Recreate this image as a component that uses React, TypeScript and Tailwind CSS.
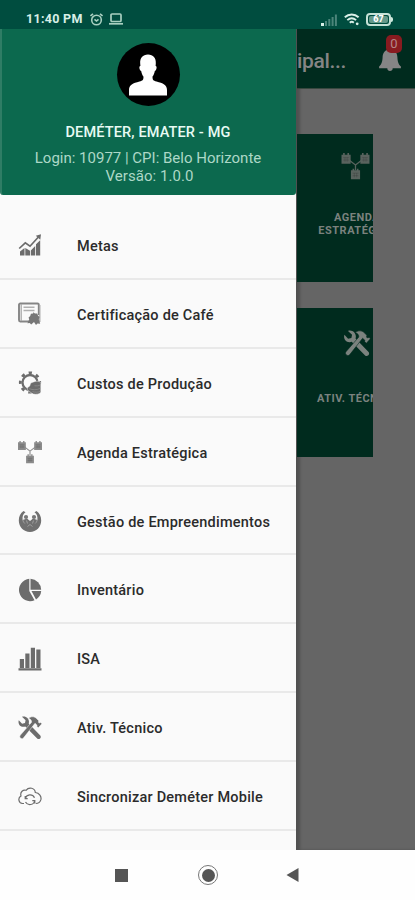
import React from "react";

type IconProps = { className?: string };

const MetasIcon = ({ className }: IconProps) => (
  <svg className={className} viewBox="0 0 24 24" fill="currentColor">
    <path d="M2 18.500l4.500-3.500v7.500H2zM7.300 15l4.700 2.800v4.700H7.300zM12.800 17.500l4.400-4.500v9.500h-4.400zM18 11.200l4.200-4v15.300H18z" />
    <path d="M1.200 15.500L7.300 9.800l4.700 3.400 8.200-9" fill="none" stroke="currentColor" strokeWidth="1.700" />
    <path d="M17.800 2.700l5.200-1.400-.7 5.400z" />
  </svg>
);

const CertificateIcon = ({ className }: IconProps) => (
  <svg className={className} viewBox="0 0 24 24">
    <path d="M2.300 1.500h17.200a1.300 1.300 0 0 1 1.300 1.300V13M11 19.500H2.300A1.500 1.500 0 0 1 1 18V2.800a1.300 1.300 0 0 1 1.300-1.300" fill="none" stroke="#858585" strokeWidth="1.900" />
    <path d="M21.800 3v17M3.200 2v17" stroke="#a9a9a9" strokeWidth="1.300" />
    <path d="M5.500 5.300h11M5.500 8.500h11" stroke="#b0b0b0" strokeWidth="1.400" />
    <path d="M15 10.200l2 1.200 2.200.1.800 2 1.500 1.600-.7 2.200 1.400 4.500-2.700-.3-1.500 1.500-2-3-2.800 2.600-1.500-1.500-2.300.1 1.800-3.700-.6-2 1.600-1.600.7-2.200 2.300-.1z" fill="#777" />
  </svg>
);

const CostIcon = ({ className }: IconProps) => (
  <svg className={className} viewBox="0 0 24 24">
    <circle cx="12" cy="11.500" r="7.500" fill="none" stroke="currentColor" strokeWidth="2.300" />
    <circle cx="12" cy="11.500" r="9.700" fill="none" stroke="currentColor" strokeWidth="2.800" strokeDasharray="3.300 4.318" strokeDashoffset="1.650" />
    <path d="M12 14c0-2 2.300-2.700 4.300-3.300 3.700-1.100 6.500-.2 6.500 2v8c0 1.800-2.700 2.600-5.500 2.600-3 0-4-1.700-6-2.800-2-.9-2.500-2.800-1.600-4 .7-.9 2.300-.8 2.300-2.500z" fill="currentColor" stroke="#fafafa" strokeWidth=".5" />
    <path d="M16.500 14.700c2 .4 4.200.1 6-.8M11.300 17.700c3.200 1.300 7.500 1.500 11.200-.4M14.500 20.600c2.800.9 5.500.8 8-.4" fill="none" stroke="#a0a0a0" strokeWidth=".5" />
  </svg>
);

const AgendaIcon = ({ className }: IconProps) => (
  <svg className={className} viewBox="0 0 28 26">
    <path d="M8 7.500l6 4.500 6-4.500M14 12v5" fill="none" stroke="currentColor" strokeWidth="1.200" />
    {[[1, 1], [18.500, 1], [9.750, 15.500]].map(([x, y]) => (
      <g key={`${x}-${y}`} transform={`translate(${x} ${y})`}>
        <path d="M0 1.500h1.500V0h1.500v1.500h2.500V0H7v1.500h1.500v8.300H0z" fill="currentColor" />
        <path d="M1.500 4.200h5.500M1.500 6.500h5.500M3.200 4v4M5.300 4v4" stroke="#202020" strokeOpacity=".25" strokeWidth=".7" />
      </g>
    ))}
  </svg>
);

const BusinessIcon = ({ className }: IconProps) => (
  <svg className={className} viewBox="0 0 24 24">
    <path d="M5.500 2C2.500 4 .8 7.300.8 11.500.8 18 5.700 23 12 23s11.200-5 11.200-11.500c0-4.200-1.700-7.500-4.700-9.500l-2 1.300c2.500 1.700 3.300 4.700 2.900 7.700L15 9.500 12 12 9 9.500 4.600 11c-.4-3 .4-6 2.900-7.700z" fill="#707070" />
    <circle cx="8" cy="8" r="2.100" fill="#777" />
    <circle cx="16" cy="8" r="2.100" fill="#777" />
    <path d="M4.600 8.500c0 3 .6 4.500 2.200 6M19.400 8.500c0 3-.6 4.500-2.200 6M8.500 11.500l1 3M15.500 11.500l-1 3M9.500 17.500l2.500-2 2.500 2" fill="none" stroke="#a8a8a8" strokeWidth=".8" />
  </svg>
);

const PieIcon = ({ className }: IconProps) => (
  <svg className={className} viewBox="0 0 24 24" fill="currentColor">
    <path d="M11.300.8V13l5.200 9.300A11.200 11.200 0 1 1 11.300.8z" />
    <path d="M12.500.8A11.200 11.200 0 0 1 23.200 11.800H12.500z" />
    <path d="M13.500 13h9.700a11 11 0 0 1-5.200 8.400z" />
  </svg>
);

const BarsIcon = ({ className }: IconProps) => (
  <svg className={className} viewBox="0 0 24 24" fill="currentColor">
    <path d="M.5 21.300h23V23.500H.5zM1.800 12h4.200v9H1.800zM7.300 6.500h4.200V21H7.300zM12.800.8H17V21h-4.200zM18.300 2.500h4.200V21h-4.200z" />
  </svg>
);

const ToolsIcon = ({ className }: IconProps) => (
  <svg className={className} viewBox="0 0 24 24" fill="currentColor">
    <path d="M4 .8l3.600 3.400-.6 2.900-2.900.7L.8 4.300C-.3 7.600 2 11 5.500 10.800c.8 0 1.300-.2 1.800-.4L19.200 22.600c1.900 1.600 4.700-.9 3.100-3L10.700 7.500C12 3.600 8.500-.5 4 .8z" />
    <path d="M10.500 2.300C12.800.3 16.200.2 18.500 2.400l2.200 2.300-.2 1.700 1.200.6.900-.5 1.300 1.300-3.600 4-1.500-1.500.3-1-2.100-2L5.400 22.100c-1.600 1.900-5-.8-3-3L13.600 6.200c.1-2-1.200-3.300-3.100-3.900z" stroke="var(--tool-gap)" strokeWidth=".5" />
  </svg>
);

const CloudIcon = ({ className }: IconProps) => (
  <svg className={className} viewBox="0 0 24 20" fill="none" stroke="currentColor" strokeWidth="1.200">
    <path d="M6 16.500H4.500A4 4 0 0 1 3 9C1.800 5 5.300 2.300 8 3.300 11-.6 17 1 17.300 5.500c4 .4 6.500 4 5.500 7.400-.8 2.500-2.600 3.600-5 3.600" />
    <path d="M7.200 11.500a5 5 0 0 1 9.300-.8M16.800 13.500a5 5 0 0 1-9.300 1.500M7.200 9v2.700h2.500M16.800 16.500v-2.800h-2.500" />
  </svg>
);

const items: { label: string; icon: React.ReactNode }[] = [
  { label: "Metas", icon: <MetasIcon className="h-6 w-6" /> },
  { label: "Certificação de Café", icon: <CertificateIcon className="h-6 w-6" /> },
  { label: "Custos de Produção", icon: <CostIcon className="h-6 w-6" /> },
  { label: "Agenda Estratégica", icon: <AgendaIcon className="-ml-px h-6 w-[26px] text-[#8b8b8b]" /> },
  { label: "Gestão de Empreendimentos", icon: <BusinessIcon className="h-6 w-6" /> },
  { label: "Inventário", icon: <PieIcon className="h-6 w-6" /> },
  { label: "ISA", icon: <BarsIcon className="h-6 w-6" /> },
  { label: "Ativ. Técnico", icon: <ToolsIcon className="h-6 w-6 [--tool-gap:#fafafa]" /> },
  { label: "Sincronizar Deméter Mobile", icon: <CloudIcon className="h-5 w-6" /> },
];

const StatusBar = () => (
  <header className="flex h-[29px] shrink-0 items-end justify-between bg-[#004d3f] pr-[22px] pb-[2px] pl-[26px] text-[#d8efe7]">
    <div className="flex items-center">
      <span className="w-[64px] text-[12.500px] leading-4 font-bold tracking-[0.300px] whitespace-nowrap">11:40 PM</span>
      <svg className="h-[13px] w-[13px] text-[#a8cfc0]" viewBox="0 0 13 13" fill="none" stroke="currentColor" strokeWidth="1.600">
        <circle cx="6.500" cy="7" r="4.800" />
        <path d="M.5 3L3 .8M12.500 3L10 .8M4.500 6.300l2 1.700 2-1.700" />
      </svg>
      <svg className="ml-[6px] h-3 w-[14px] text-[#a8cfc0]" viewBox="0 0 14 12" fill="none" stroke="currentColor" strokeWidth="1.700">
        <rect x="2" y="1" width="10" height="7.500" rx="1" />
        <path d="M0 10.800h14" />
      </svg>
    </div>
    <div className="flex items-center pb-px">
      <svg className="h-3 w-4" viewBox="0 0 16 12" fill="currentColor">
        <path d="M0 9h3v3H0z" />
        <path d="M4 7h2v5H4zM7.300 5h2v7h-2zM10.600 3h2v9h-2zM13.900.5h2V12h-2z" opacity=".35" />
      </svg>
      <svg className="ml-[7px] h-[13px] w-4" viewBox="0 0 16 13" fill="none" stroke="currentColor" strokeWidth="1.900">
        <path d="M.8 4.300c4-3.700 9.800-3.700 13.800 0M3.300 7.100c2.700-2.400 6.100-2.400 8.800 0M5.800 9.700c1.200-1.100 2.700-1.100 4 0" />
        <circle cx="13.200" cy="10.800" r="1.400" fill="currentColor" stroke="none" />
      </svg>
      <div className="ml-[6px] flex h-[13px] w-[25px] items-center justify-center rounded-[4px] border-2 border-[#c5e2d7] p-px">
        <div className="flex h-full w-full items-center justify-center rounded-[2px] bg-[#64998a] text-[9px] leading-none font-black text-white">67</div>
      </div>
      <div className="h-[5px] w-[2px] rounded-r bg-[#d0eadf]" />
    </div>
  </header>
);

const Drawer = () => (
  <aside className="flex w-[296px] shrink-0 flex-col overflow-hidden bg-[#fafafa]">
    <div className="flex h-[166px] shrink-0 flex-col items-center rounded-b-[3px] border-l-2 border-[#2f7d65] bg-[#0c694e] pt-[14px] pr-[2px]">
      <div className="flex h-[63px] w-[63px] items-center justify-center rounded-full bg-black">
        <svg className="h-[42px] w-[40px]" viewBox="0 0 40 42" fill="#fff">
          <path d="M20 .5c5.300 0 8.200 3.500 7.800 9l-.2 2.500c1.800-.2 1 4.500-.8 5-.5 3.500-2.300 5.700-2.300 5.700.1 3.300.6 3.800 4 4.800 6.500 1.700 10.500 3.500 10.500 8.500v5.500H1V36c0-5 4-6.800 10.500-8.500 3.400-1 3.900-1.500 4-4.800 0 0-1.800-2.200-2.300-5.700-1.800-.5-2.600-5.200-.8-5l-.2-2.500c-.4-5.500 2.500-9 7.800-9z" />
        </svg>
      </div>
      <h2 className="mt-[18px] text-[14.500px] leading-[18px] font-medium tracking-[0.140px] whitespace-nowrap text-[#e8fbf4]">DEMÉTER, EMATER - MG</h2>
      <p className="mt-[8px] text-center text-[15px] leading-[17.500px] whitespace-nowrap text-[#add8c7]">
        <span className="block">Login: 10977 | CPI: Belo Horizonte</span>
        <span className="block pl-[3px] tracking-[0.050px]">Versão: 1.0.0</span>
      </p>
    </div>
    <nav className="pt-4">
      {items.map((item) => (
        <div key={item.label} className="flex h-[68.900px] items-center border-b-2 border-[#e9e9e9] pt-[3px] pl-[17px] text-[#6c6c6c]">
          <span className="flex w-[60px] items-center pb-px pl-px">{item.icon}</span>
          <span className="pt-[2px] text-[14.500px] leading-5 font-medium tracking-[0.230px] whitespace-nowrap text-[#2b2b2b]">{item.label}</span>
        </div>
      ))}
    </nav>
  </aside>
);

const DimmedPage = () => (
  <main className="flex min-w-0 flex-1 flex-col border-l border-[#505050] bg-[#656565] shadow-[inset_3px_0_3px_#0003]">
    <div className="flex h-[60px] shrink-0 justify-between border-b border-[#38483f] bg-[#002b1e] text-[#858585]">
      <h1 className="pt-[18px] text-[21px] leading-7 font-medium tracking-[-0.350px]">ipal...</h1>
      <div className="relative mt-[19px] mr-[13px] h-[24px] w-[24px]">
        <svg className="h-6 w-6" viewBox="0 0 24 24" fill="currentColor">
          <path d="M12 0c1 0 1.700.7 1.700 1.600 3.700.8 5.500 3.800 5.700 7.600.2 5 1.300 7.300 3.500 9.300v1.800H1.100v-1.800c2.200-2 3.300-4.300 3.500-9.300.2-3.800 2-6.800 5.700-7.600C10.300.7 11 0 12 0zM9.300 20.200h5.400c0 1.700-1.100 2.700-2.700 2.700s-2.700-1-2.700-2.700z" />
        </svg>
        <span className="absolute -top-[13px] left-[8px] flex h-[18px] w-[16px] items-center justify-center rounded-[5px] bg-[#881b20] text-[13px] text-[#b38688]">0</span>
      </div>
    </div>
    <div className="flex flex-col gap-[26px] pt-[45px]">
      <section className="flex h-[148px] w-[76px] flex-col overflow-hidden bg-[#002b1e] text-[#7b827e]">
        <AgendaIcon className="mt-[18px] ml-[43px] h-[28px] w-[31px] shrink-0 text-[#59635e]" />
        <p className="mt-[31px] ml-[21px] w-[78px] text-center text-[11px] leading-[13px] font-bold tracking-[0.500px]">AGENDA ESTRATÉGICA</p>
      </section>
      <section className="flex h-[149px] w-[76px] flex-col overflow-hidden bg-[#002b1e] text-[#7b827e]">
        <ToolsIcon className="mt-[22px] ml-[46px] h-[27px] w-[28px] shrink-0 [--tool-gap:#002b1e]" />
        <p className="mt-[35px] ml-[20px] text-[11px] leading-[13px] font-bold tracking-[0.500px] whitespace-nowrap">ATIV. TÉCNICO</p>
      </section>
    </div>
  </main>
);

const NavigationBar = () => (
  <footer className="flex h-[50px] shrink-0 items-center bg-[#fefefe] pl-[115px] text-[#555]">
    <div className="h-[13px] w-[13px] bg-current" />
    <div className="ml-[70px] flex h-5 w-5 items-center justify-center rounded-full border-[1.500px] border-[#777]">
      <div className="h-[13px] w-[13px] rounded-full bg-current" />
    </div>
    <svg className="ml-[68px] h-[14px] w-[13px]" viewBox="0 0 13 14" fill="currentColor">
      <path d="M12.500 0v14L.5 7z" />
    </svg>
  </footer>
);

export default function App() {
  return (
    <div className="flex h-[900px] w-[415px] flex-col overflow-hidden font-['Roboto',sans-serif]">
      <StatusBar />
      <div className="flex min-h-0 flex-1">
        <Drawer />
        <DimmedPage />
      </div>
      <NavigationBar />
    </div>
  );
}
